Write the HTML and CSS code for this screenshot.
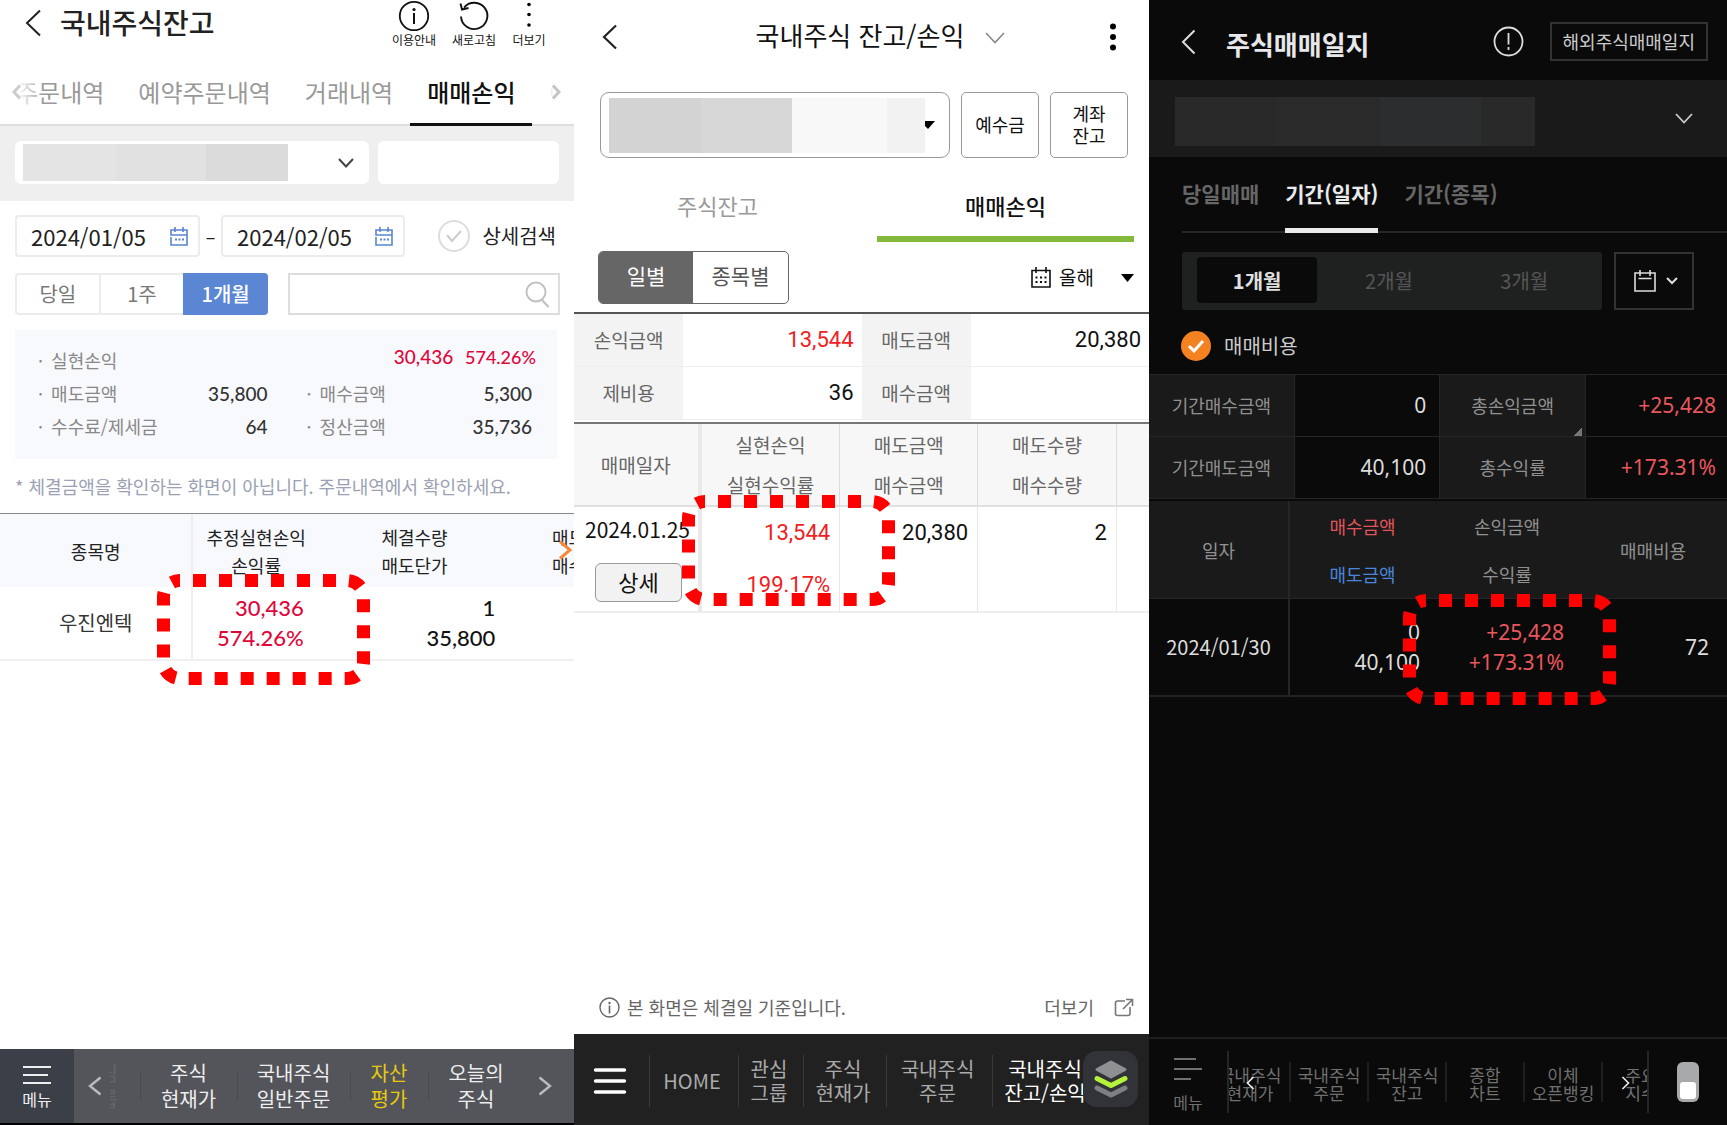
FILE: index.html
```html
<!DOCTYPE html>
<html lang="ko">
<head>
<meta charset="utf-8">
<meta name="viewport" content="width=device-width, initial-scale=1">
<title>국내주식 매매손익</title>
<link rel="stylesheet" href="styles.css">
</head>
<body>
<svg class="defs" aria-hidden="true">
  <symbol id="highlight" viewBox="0 0 213 111">
    <rect x="6.500" y="6.500" width="200" height="98" rx="16.300" fill="none" stroke="#f00" stroke-width="13" stroke-dasharray="13 13" stroke-dashoffset="12.800"/>
  </symbol>
</svg>
<main class="screens">

  <section class="screen balance">
    <header class="bal-header">
      <button class="icon-btn bal-back" aria-label="뒤로"><svg width="17" height="28" viewBox="0 0 17 28"><path d="M15 1.500 2 14l13 12.500" fill="none" stroke="#222" stroke-width="2"/></svg></button>
      <h1 class="bal-title">국내주식잔고</h1>
      <div class="bal-actions">
        <button class="action"><svg width="32" height="33" viewBox="0 0 32 33"><circle cx="16" cy="16" r="14.200" fill="none" stroke="#111" stroke-width="1.800"/><circle cx="16" cy="9.500" r="1.600" fill="#111"/><path d="M16 13v11" stroke="#111" stroke-width="2"/></svg>이용안내</button>
        <button class="action"><svg width="32" height="33" viewBox="0 0 32 33"><path d="M3 16.500A13.200 13.200 0 1 0 6 7.500M2.500 3.500 4 9.500l6.500-1.500" fill="none" stroke="#111" stroke-width="1.900"/></svg>새로고침</button>
        <button class="action action-more"><svg width="10" height="33" viewBox="0 0 10 33"><circle cx="5" cy="4.500" r="1.800"/><circle cx="5" cy="14.500" r="1.800"/><circle cx="5" cy="25" r="1.800"/></svg>더보기</button>
      </div>
    </header>
    <nav class="bal-tabs">
      <button class="bal-tab">주문내역</button>
      <button class="bal-tab">예약주문내역</button>
      <button class="bal-tab">거래내역</button>
      <button class="bal-tab active">매매손익</button>
      <button class="bal-tab">예수금</button>
      <span class="fade fade-left"><svg width="10" height="16" viewBox="0 0 10 16"><path d="M8 1.500 2 8l6 6.500" fill="none" stroke="#ccc" stroke-width="3"/></svg></span>
      <span class="fade fade-right"><svg width="10" height="16" viewBox="0 0 10 16"><path d="m2 1.500 6 6.500-6 6.500" fill="none" stroke="#c4c4c4" stroke-width="3"/></svg></span>
    </nav>
    <div class="bal-account">
      <label class="picker bal-picker">
        <select aria-label="계좌 선택"><option></option></select>
        <span class="mask mask-light"></span>
        <svg class="picker-arrow" width="16" height="10" viewBox="0 0 16 10"><path d="m1 1 7 7.500L15 1" fill="none" stroke="#444" stroke-width="2"/></svg>
      </label>
      <input class="bal-pass" type="password" aria-label="계좌 비밀번호">
    </div>
    <div class="bal-dates">
      <label class="date-field"><input type="text" value="2024/01/05" aria-label="시작일"><svg width="18" height="19" viewBox="0 0 18 19"><path d="M1 8V3h16v5zM1 10v8h16V8M5 0v5M13 0v5" fill="none" stroke="#5a84d3" stroke-width="1.600"/><path d="M5 12.500h2M8.500 12.500h2M12 12.500h2" stroke="#5a84d3" stroke-width="2"/></svg></label>
      <span class="dash">–</span>
      <label class="date-field"><input type="text" value="2024/02/05" aria-label="종료일"><svg width="18" height="19" viewBox="0 0 18 19"><path d="M1 8V3h16v5zM1 10v8h16V8M5 0v5M13 0v5" fill="none" stroke="#5a84d3" stroke-width="1.600"/><path d="M5 12.500h2M8.500 12.500h2M12 12.500h2" stroke="#5a84d3" stroke-width="2"/></svg></label>
      <label class="check bal-check"><span class="tick"><input type="checkbox"><svg width="18" height="14" viewBox="0 0 18 14"><path d="m2 6 5 6 9-10" fill="none" stroke="#ccc" stroke-width="2"/></svg></span>상세검색</label>
    </div>
    <div class="bal-filter">
      <div class="bal-segment"><button>당일</button><button>1주</button><button class="active">1개월</button></div>
      <label class="search"><input type="search" aria-label="종목 검색"><svg width="25" height="27" viewBox="0 0 25 27"><circle cx="11" cy="11" r="9.500" fill="none" stroke="#c2c2c2" stroke-width="2"/><path d="m16.500 18.500 7 7.500" stroke="#c2c2c2" stroke-width="2.200"/></svg></label>
    </div>
    <dl class="bal-summary">
      <div class="wide"><dt><i>·</i> 실현손익</dt><dd class="gain">30,436 <small>574.26%</small></dd></div>
      <div><dt><i>·</i> 매도금액</dt><dd>35,800</dd></div>
      <div><dt><i>·</i> 매수금액</dt><dd>5,300</dd></div>
      <div><dt><i>·</i> 수수료/제세금</dt><dd>64</dd></div>
      <div><dt><i>·</i> 정산금액</dt><dd>35,736</dd></div>
    </dl>
    <p class="bal-note">* 체결금액을 확인하는 화면이 아닙니다. 주문내역에서 확인하세요.</p>
    <div class="table-clip">
      <table class="bal-table">
        <colgroup><col class="b1"><col class="b2"><col class="b3"><col class="b4"></colgroup>
        <thead><tr><th>종목명</th><th>추정실현손익<br>손익률</th><th>체결수량<br>매도단가</th><th>매도금액<br>매수금액</th></tr></thead>
        <tbody><tr><td>우진엔텍</td><td class="gain">30,436<br>574.26%</td><td>1<br>35,800</td><td>35,800<br>5,300</td></tr></tbody>
      </table>
      <svg class="scroll-hint" width="15" height="20" viewBox="0 0 15 20"><path d="m2 1.500 10 8.500-10 8.500" fill="none" stroke="#f5893a" stroke-width="3"/></svg>
      <svg class="ring ring-a" width="213" height="111"><use href="#highlight"/></svg>
    </div>
    <nav class="bal-nav">
      <a class="bal-menu" href="#"><svg width="30" height="20" viewBox="0 0 30 20"><path d="M1 2h28M1 10h25M1 18h28" stroke="#eee" stroke-width="2"/></svg>메뉴</a>
      <div class="bal-links">
        <button class="icon-btn nav-prev" aria-label="이전"><svg width="14" height="20" viewBox="0 0 14 20"><path d="M12.500 1.500 2 10l10.500 8.500" fill="none" stroke="#bbb" stroke-width="2.400"/></svg></button>
        <a class="faded" href="#">관심<br>그룹</a>
        <a href="#">주식<br>현재가</a>
        <a href="#">국내주식<br>일반주문</a>
        <a class="active" href="#">자산<br>평가</a>
        <a href="#">오늘의<br>주식</a>
        <button class="icon-btn nav-next" aria-label="다음"><svg width="14" height="20" viewBox="0 0 14 20"><path d="M1.500 1.500 12 10 1.500 18.500" fill="none" stroke="#bbb" stroke-width="2.400"/></svg></button>
      </div>
    </nav>
  </section>

  <section class="screen profit">
    <header class="pro-header">
      <button class="icon-btn" aria-label="뒤로"><svg width="16" height="26" viewBox="0 0 16 26"><path d="M14 1.500 2 13l12 11.500" fill="none" stroke="#222" stroke-width="2.200"/></svg></button>
      <h1 class="pro-title">국내주식 잔고/손익</h1>
      <button class="icon-btn pro-open" aria-label="화면 선택"><svg width="20" height="12" viewBox="0 0 20 12"><path d="m1 1 9 9.500L19 1" fill="none" stroke="#888" stroke-width="1.600"/></svg></button>
      <button class="icon-btn pro-more" aria-label="더보기"><svg width="8" height="28" viewBox="0 0 8 28"><circle cx="4" cy="3.500" r="3"/><circle cx="4" cy="14" r="3"/><circle cx="4" cy="24.500" r="3"/></svg></button>
    </header>
    <div class="pro-account">
      <label class="picker pro-picker">
        <select aria-label="계좌 선택"><option></option></select>
        <svg class="picker-arrow" width="15" height="8" viewBox="0 0 15 8"><path d="M0 0h15L8 8z"/></svg>
        <span class="mask mask-mid"></span>
      </label>
      <button class="pro-box">예수금</button>
      <button class="pro-box">계좌<br>잔고</button>
    </div>
    <nav class="pro-tabs"><button>주식잔고</button><button class="active">매매손익</button></nav>
    <div class="pro-filter">
      <div class="pro-segment"><button class="active">일별</button><button>종목별</button></div>
      <label class="period">
        <svg width="20" height="21" viewBox="0 0 20 21"><path d="M1 3.500h18V20H1zM5 0v6M15 0v6" fill="none" stroke="#111" stroke-width="1.600"/><path d="M4.500 10.500h2m2.500 0h2m2.500 0h2M4.500 15h2m2.500 0h2m2.500 0h2" stroke="#111" stroke-width="2.200"/></svg>
        <span class="period-pick"><select aria-label="기간"><option>올해</option></select><svg width="13" height="8" viewBox="0 0 13 8"><path d="M0 0h13L6.500 8z"/></svg></span>
      </label>
    </div>
    <table class="pro-sums">
      <colgroup><col class="s1"><col class="s2"><col class="s1"><col class="s2"></colgroup>
      <tbody>
        <tr><th>손익금액</th><td class="up">13,544</td><th>매도금액</th><td>20,380</td></tr>
        <tr><th>제비용</th><td>36</td><th>매수금액</th><td></td></tr>
      </tbody>
    </table>
    <div class="table-clip">
      <table class="pro-table">
        <colgroup><col class="p1"><col class="p2"><col class="p3"><col class="p2"><col></colgroup>
        <thead><tr><th>매매일자</th><th>실현손익<br>실현수익률</th><th>매도금액<br>매수금액</th><th>매도수량<br>매수수량</th><th></th></tr></thead>
        <tbody><tr><td class="day">2024.01.25<button>상세</button></td><td class="up">13,544<br>199.17%</td><td>20,380</td><td>2</td><td></td></tr></tbody>
      </table>
      <svg class="ring ring-b" width="213" height="111"><use href="#highlight"/></svg>
    </div>
    <div class="pro-note">
      <svg width="21" height="21" viewBox="0 0 21 21"><circle cx="10.500" cy="10.500" r="9.500" fill="none" stroke="#666" stroke-width="1.400"/><circle cx="10.500" cy="6" r="1.200" fill="#666"/><path d="M10.500 8.500v8" stroke="#666" stroke-width="1.600"/></svg>
      <span>본 화면은 체결일 기준입니다.</span>
      <a href="#">더보기<svg width="20" height="19" viewBox="0 0 20 19"><path d="M11 3H3.500Q1.500 3 1.500 5v10.500q0 2 2 2H14q2 0 2-2V9M9 11l9-9M12 1.500h6.500V8" fill="none" stroke="#777" stroke-width="1.600"/></svg></a>
    </div>
    <nav class="pro-nav">
      <a href="#" aria-label="전체 메뉴"><svg width="34" height="28" viewBox="0 0 34 28"><path d="M2.500 3h29M2.500 14h29M2.500 25h29" stroke="#fff" stroke-width="3.400" stroke-linecap="round"/></svg></a>
      <a href="#">HOME</a>
      <a href="#">관심<br>그룹</a>
      <a href="#">주식<br>현재가</a>
      <a href="#">국내주식<br>주문</a>
      <a class="active" href="#">국내주식<br>잔고/손익</a>
      <button class="layers" aria-label="최근 화면"><svg width="34" height="38" viewBox="0 0 34 38"><path d="m3 28 14 7 14-7" fill="none" stroke="#7d7f81" stroke-width="5" stroke-linecap="round" stroke-linejoin="round"/><path d="m3 18.500 14 7 14-7" fill="none" stroke="#b5f23c" stroke-width="5" stroke-linecap="round" stroke-linejoin="round"/><path d="M17 2 31 9.500 17 17 3 9.500z" fill="#8e9092" stroke="#8e9092" stroke-width="3" stroke-linejoin="round"/></svg></button>
    </nav>
  </section>

  <section class="screen journal">
    <header class="jou-header">
      <button class="icon-btn" aria-label="뒤로"><svg width="15" height="26" viewBox="0 0 15 26"><path d="M13.500 1.500 2 13l11.500 11.500" fill="none" stroke="#ddd" stroke-width="2"/></svg></button>
      <h1 class="jou-title">주식매매일지</h1>
      <button class="icon-btn" aria-label="안내"><svg width="31" height="31" viewBox="0 0 31 31"><circle cx="15.500" cy="15.500" r="14" fill="none" stroke="#ddd" stroke-width="1.800"/><path d="M15.500 7v11.500M15.500 21v3" stroke="#ddd" stroke-width="1.800"/></svg></button>
      <button class="jou-over">해외주식매매일지</button>
    </header>
    <label class="picker jou-picker">
      <select aria-label="계좌 선택"><option></option></select>
      <span class="mask mask-dark"></span>
      <svg class="picker-arrow" width="18" height="11" viewBox="0 0 18 11"><path d="m1 1 8 8.500L17 1" fill="none" stroke="#ccc" stroke-width="1.800"/></svg>
    </label>
    <nav class="jou-tabs"><button>당일매매</button><button class="active">기간(일자)</button><button>기간(종목)</button></nav>
    <div class="jou-range">
      <div class="jou-segment"><button class="active">1개월</button><button>2개월</button><button>3개월</button></div>
      <button class="jou-cal" aria-label="기간 직접 선택"><svg width="22" height="22" viewBox="0 0 22 22"><path d="M1 3h20v18H1zM6 0v6M16 0v6M4.500 8.500h13" fill="none" stroke="#ddd" stroke-width="1.600"/></svg><svg width="12" height="8" viewBox="0 0 12 8"><path d="m1 1 5 5 5-5" fill="none" stroke="#ddd" stroke-width="2"/></svg></button>
    </div>
    <label class="check jou-check"><span class="tick"><input type="checkbox" checked><svg width="18" height="14" viewBox="0 0 18 14"><path d="m2 7 5 5 9-10" fill="none" stroke="#fff" stroke-width="3"/></svg></span>매매비용</label>
    <table class="jou-sums">
      <colgroup><col class="t1"><col class="t1"><col class="t1"><col></colgroup>
      <tbody>
        <tr><th>기간매수금액</th><td>0</td><th class="fold">총손익금액</th><td class="rise">+25,428</td></tr>
        <tr><th>기간매도금액</th><td>40,100</td><th>총수익률</th><td class="rise">+173.31%</td></tr>
      </tbody>
    </table>
    <div class="table-clip">
      <table class="jou-table">
        <colgroup><col class="j1"><col class="j2"><col class="j3"><col></colgroup>
        <thead><tr><th>일자</th><th><span class="buy">매수금액</span><br><span class="sell">매도금액</span></th><th>손익금액<br>수익률</th><th>매매비용</th></tr></thead>
        <tbody><tr><td class="day">2024/01/30</td><td>0<br>40,100</td><td class="rise">+25,428<br>+173.31%</td><td class="fee">72</td></tr></tbody>
      </table>
      <svg class="ring ring-c" width="213" height="111"><use href="#highlight"/></svg>
    </div>
    <nav class="jou-nav">
      <a class="jou-menu" href="#"><svg width="28" height="24" viewBox="0 0 28 24"><path d="M0 2h22M0 12h28M0 22h17" stroke="#707070" stroke-width="2"/></svg>메뉴</a>
      <div class="jou-links">
        <a href="#">국내주식<br>현재가</a><a href="#">국내주식<br>주문</a><a href="#">국내주식<br>잔고</a><a href="#">종합<br>차트</a><a href="#">이체<br>오픈뱅킹</a><a href="#">주요<br>지수</a>
        <svg class="arrow-left" width="9" height="14" viewBox="0 0 9 14"><path d="M7.500 1 1.500 7l6 6" fill="none" stroke="#eee" stroke-width="1.600"/></svg>
        <svg class="arrow-right" width="9" height="14" viewBox="0 0 9 14"><path d="m1.500 1 6 6-6 6" fill="none" stroke="#eee" stroke-width="1.600"/></svg>
      </div>
      <button class="icon-btn jou-switch" aria-label="화면 전환"><svg width="24" height="42" viewBox="0 0 24 42"><rect x="1" y="1" width="22" height="40" rx="6" fill="#a8a9ab"/><rect x="4" y="21" width="16" height="17" rx="3" fill="#fff"/></svg></button>
    </nav>
  </section>
</main>
</body>
</html>
```

FILE: styles.css
```css
* { box-sizing: border-box; }
body {
  margin: 0;
  font-family: "Noto Sans CJK KR", "Noto Sans", sans-serif;
  font-size: 18px;
  background: #fff;
  color: #222;
}
h1, p, dl, dd { margin: 0; }
button, input, select { font: inherit; color: inherit; background: none; border: 0; padding: 0; margin: 0; border-radius: 0; }
input, select { appearance: none; min-width: 0; outline: none; }
button { white-space: nowrap; }
a { color: inherit; text-decoration: none; white-space: nowrap; }
svg { display: block; flex: none; }
table { width: 100%; border-spacing: 0; table-layout: fixed; }
th, td { padding: 0; font-weight: 400; white-space: nowrap; }
.defs { position: absolute; width: 0; height: 0; }

.screens { display: grid; grid-template-columns: 574fr 575fr 578fr; min-height: 100vh; }
.screen { display: flex; flex-direction: column; min-width: 0; overflow: hidden; }
.icon-btn { display: flex; align-items: center; justify-content: center; }
.picker { display: grid; align-items: center; }
.picker > * { grid-area: 1 / 1; }
.picker select { width: 100%; height: 100%; }
.picker-arrow { justify-self: end; pointer-events: none; }
.mask { pointer-events: none; }
.check { display: flex; align-items: center; white-space: nowrap; }
.tick { display: grid; place-items: center; }
.tick > * { grid-area: 1 / 1; }
.tick input { border-radius: 50%; }
.tick svg { pointer-events: none; }
.table-clip { position: relative; }
.ring { position: absolute; pointer-events: none; }

/* balance screen */
.bal-header { display: flex; align-items: flex-start; height: 62px; padding: 0 28px 0 25px; }
.bal-back { height: 46px; }
.bal-title { flex: 1; padding-left: 18px; font-size: 28px; font-weight: 500; line-height: 44px; }
.bal-actions { display: flex; gap: 16px; color: #111; }
.action { display: flex; flex-direction: column; align-items: center; width: 44px; font-size: 12px; line-height: 14px; }
.action-more { width: 34px; }
.bal-tabs { position: relative; display: flex; height: 64px; overflow: hidden; box-shadow: inset 0 -2px #ddd; }
.bal-tab { flex: none; padding: 0 17px 4px; font-size: 24px; line-height: 56px; color: #999; }
.bal-tab:first-child { margin-left: -1px; }
.bal-tab.active { padding-bottom: 1px; color: #111; font-weight: 500; border-bottom: 3px solid #111; }
.fade { position: absolute; top: 0; height: 60px; display: flex; align-items: center; }
.fade-left { left: 0; width: 44px; padding-left: 12px; background: linear-gradient(to right, #fff 40%, #fff0); }
.fade-right { right: 0; width: 28px; padding-left: 5px; background: linear-gradient(to right, #fff8, #fff 30%); }
.bal-account { display: grid; grid-template-columns: 354fr 181fr; gap: 9px; padding: 15px 15px 17px; background: #efefef; }
.bal-picker { height: 43px; padding: 0 15px 0 8px; background: #fff; border-radius: 6px; }
.mask-light { width: 80%; height: 37px; background: linear-gradient(to right, #e4e4e4 35%, #e1e1e1 35% 69%, #dbdbdb 69%); }
.bal-pass { background: #fff; border-radius: 6px; }
.bal-dates { display: grid; grid-template-columns: minmax(0, 185fr) 21px minmax(0, 184fr) minmax(0, 154fr); align-items: center; height: 56px; padding: 14px 15px 0; }
.date-field { display: flex; align-items: center; height: 42px; padding: 0 10px 0 14px; border: 2px solid #ececec; border-radius: 4px; }
.date-field input { flex: 1; width: 0; font-size: 22px; line-height: 32px; }
.dash { line-height: 38px; text-align: center; }
.bal-check { justify-content: flex-end; gap: 12px; padding-right: 3px; font-size: 20px; line-height: 38px; }
.bal-check input { width: 32px; height: 32px; border: 2px solid #ddd; }
.bal-filter { display: grid; grid-template-columns: 253fr 272fr; gap: 20px; padding: 16px 14px 0 15px; }
.bal-segment { display: grid; grid-template-columns: 83fr 86fr 84fr; height: 42px; border: 2px solid #ececec; border-radius: 4px; font-size: 20px; color: #777; line-height: 34px; }
.bal-segment button + button { border-left: 2px solid #ececec; }
.bal-segment button.active { margin: -2px -2px -2px 0; border: 0; background: #5a86d4; color: #fff; font-weight: 500; border-radius: 0 4px 4px 0; }
.search { display: flex; align-items: center; padding: 0 8px; border: 2px solid #ddd; }
.search input { flex: 1; }
.bal-summary { display: grid; grid-template-columns: 228fr 224fr; column-gap: 39px; margin: 15px 17px 0 15px; padding: 14px 25px 16px 23px; background: #f8f9fd; color: #888; line-height: 33px; }
.bal-summary div { display: flex; justify-content: space-between; }
.bal-summary i { margin-right: 3px; font-style: normal; }
.bal-summary dd { color: #333; font-family: Lato, "Noto Sans CJK KR", sans-serif; font-size: 19px; font-weight: 500; }
.bal-summary .wide { grid-column: 1 / -1; margin-right: -4px; }
.wide dd { line-height: 26px; }
.bal-summary small { margin-left: 7px; font-size: 18px; }
.bal-summary .gain, .bal-table .gain { color: #e0063a; }
.bal-note { padding: 13px 15px; font-size: 18px; line-height: 28px; color: #9aa1b2; white-space: nowrap; }
.balance .table-clip { overflow: hidden; height: 174px; }
.bal-table { width: 115%; border-top: 1px solid #888; }
.b1 { width: 29.3%; } .b2 { width: 19%; } .b3 { width: 29%; }
.bal-table th { height: 73px; background: #f8f9fd; line-height: 28px; }
.bal-table td { height: 74px; border-bottom: 2px solid #f0f0f0; text-align: right; padding-right: 15px; font-family: Lato, "Noto Sans CJK KR", sans-serif; font-size: 22px; font-weight: 500; line-height: 30px; color: #111; }
.bal-table td:first-child { padding: 0; text-align: center; font-size: 20px; font-weight: 400; color: #333; }
.bal-table th:first-child, .bal-table td:first-child { border-right: 2px solid #eee; }
.scroll-hint { position: absolute; right: 1px; top: 27px; }
.ring-a { left: 157px; top: 61px; }
.bal-nav { display: flex; height: 76px; margin-top: auto; border-bottom: 2px solid #000; background: #53555b; color: #eee; }
.bal-menu { display: flex; flex-direction: column; align-items: center; gap: 6px; width: 74px; padding-top: 16px; background: #3b3f48; font-size: 16px; line-height: 16px; }
.bal-links { flex: 1; display: grid; grid-template-columns: 36fr 30fr 97fr 113fr 78fr 96fr 50fr; align-items: center; font-size: 20px; line-height: 26px; text-align: center; }
.bal-links a + a { background: linear-gradient(#484a50, #484a50) left center / 1px 30px no-repeat; }
.bal-links .active { color: #e8c80e; }
.bal-links .faded { display: flex; justify-content: flex-end; padding-right: 22px; overflow: hidden; color: #63656b; }
.nav-prev { padding-left: 6px; }
.nav-next { padding-right: 8px; }

/* profit screen */
.pro-header { display: grid; grid-template-columns: 1fr auto 1fr auto; align-items: center; height: 74px; padding: 0 32px 0 28px; justify-items: start; }
.pro-title { padding: 0 0 4px 9px; font-size: 26px; font-weight: 400; line-height: 36px; color: #111; }
.pro-open { padding-left: 21px; padding-top: 2px; }
.pro-account { display: grid; grid-template-columns: 350fr 78fr 78fr; column-gap: 11px; margin: 18px 21px 0 26px; height: 66px; }
.pro-picker { padding: 0 14px 0 8px; border: 1px solid #999; border-radius: 9px; }
.mask-mid { width: 97%; height: 55px; background: linear-gradient(to right, #d3d3d3 29%, #d7d7d7 29% 58%, #f8f8f8 58% 88%, #f2f2f2 88%); }
.pro-box { padding-bottom: 3px; border: 1px solid #999; border-radius: 5px; line-height: 22px; color: #111; }
.pro-tabs { display: grid; grid-template-columns: 1fr 1fr; column-gap: 31px; padding: 0 15px; }
.pro-tabs button { height: 84px; padding-top: 16px; border-bottom: 6px solid transparent; font-size: 22px; color: #999; }
.pro-tabs .active { border-color: #83b93c; color: #111; font-weight: 500; }
.pro-filter { display: flex; justify-content: space-between; align-items: center; padding: 9px 15px 8px 24px; }
.pro-segment { display: grid; grid-template-columns: 94px 95px; height: 53px; border: 1px solid #666; border-radius: 5px; overflow: hidden; font-size: 21px; color: #555; line-height: 44px; }
.pro-segment button { padding-bottom: 5px; }
.pro-segment .active { background: #666; color: #fff; }
.period { display: flex; align-items: center; gap: 8px; color: #111; }
.period-pick { display: grid; align-items: center; width: 75px; }
.period-pick > * { grid-area: 1 / 1; }
.period-pick select { padding-bottom: 2px; font-size: 19px; line-height: 28px; }
.period-pick svg { justify-self: end; pointer-events: none; }
.pro-sums { border-top: 2px solid #555; }
.s1 { width: 19%; } .s2 { width: 31%; }
.pro-sums th, .pro-sums td { height: 53px; padding-bottom: 2px; border-bottom: 1px solid #eee; }
.profit th { font-size: 19px; color: #666; }
.pro-sums th { background: #f3f3f3; }
.profit td { font-family: Roboto, "Noto Sans CJK KR", sans-serif; font-size: 22px; text-align: right; color: #111; }
.pro-sums td { padding-right: 8px; }
.profit td.up { color: #f0201e; }
.pro-table { border-top: 2px solid #777; margin-top: 2px; }
.p1 { width: 22.2%; } .p2 { width: 24.1%; } .p3 { width: 24%; }
.pro-table th { height: 83px; background: #f7f7f7; line-height: 40px; border-bottom: 2px solid #e0e0e0; border-right: 1px solid #ddd; }
.pro-table td { height: 105px; vertical-align: top; padding-right: 9px; line-height: 52px; border-bottom: 2px solid #eee; border-right: 1px solid #e8e8e8; }
.pro-table th:first-child, .pro-table td:first-child { border-right: 4px solid #e9e9e9; }
.pro-table th:last-child, .pro-table td:last-child { border-right: 0; }
.pro-table .day { padding: 0 0 0 11px; text-align: left; font-family: "Noto Sans CJK KR", sans-serif; font-size: 21px; line-height: 44px; }
.day button { display: block; width: 87px; height: 39px; margin: 12px 0 0 10px; padding-bottom: 4px; border: 1px solid #999; border-radius: 6px; background: #f2f2f2; font-size: 22px; line-height: 32px; }
.ring-b { left: 108px; top: 75px; }
.pro-note { display: flex; align-items: center; gap: 7px; margin-top: auto; padding: 0 15px 13px 25px; line-height: 28px; color: #666; }
.pro-note a { display: flex; align-items: center; gap: 20px; margin-left: auto; }
.pro-nav { position: relative; display: grid; grid-template-columns: 75fr 89fr 65fr 83fr 106fr 107fr 50fr; align-items: center; height: 91px; padding-top: 3px; background: #212121; color: #aaa; font-size: 20px; line-height: 24px; text-align: center; }
.pro-nav a { display: grid; place-items: center; height: 52px; padding-right: 4px; }
.pro-nav a + a { border-left: 1px solid #3a3a3a; }
.pro-nav .active { padding-right: 2px; color: #fff; }
.layers { position: absolute; right: 11px; top: 17px; width: 55px; height: 56px; display: grid; place-items: center; border-radius: 14px; background: #323338; }

/* journal screen */
.journal { background: #0a0a0a; color: #ccc; }
.jou-header { display: flex; align-items: center; height: 80px; padding: 3px 19px 0 32px; }
.jou-title { flex: 1; padding: 4px 0 0 30px; font-size: 26px; font-weight: 700; line-height: 36px; color: #e6e8ea; }
.jou-over { height: 39px; margin-left: 26px; padding: 0 11px 2px; border: 2px solid #333; line-height: 32px; }
.jou-picker { height: 77px; padding: 0 34px 0 26px; background: #1a1a1a; }
.mask-dark { width: 69.5%; height: 49px; margin-top: 5px; background: linear-gradient(to right, #29292a 28%, #2a2a2a 28% 57%, #2c2d2f 57% 85%, #292929 85%); }
.jou-tabs { display: flex; gap: 26px; height: 76px; margin-left: 33px; box-shadow: inset 0 -2px #262626; }
.jou-tabs button { font-size: 21px; font-weight: 700; color: #666; line-height: 66px; border-bottom: 5px solid transparent; }
.jou-tabs .active { color: #e8eaec; border-color: #e8eaec; }
.jou-range { display: grid; grid-template-columns: 420fr 80fr; column-gap: 12px; padding: 19px 33px 0; }
.jou-segment { display: grid; grid-template-columns: repeat(3, 1fr); height: 58px; padding: 5px 10px 7px 4px; border-radius: 3px; background: #1f2121; font-size: 20px; color: #555; }
.jou-segment .active { margin: 0 4px 0 11px; border-radius: 4px; background: #0a0a0a; color: #e0e0e0; font-weight: 700; }
.jou-cal { display: flex; align-items: center; justify-content: center; gap: 10px; padding-left: 4px; border: 2px solid #333; }
.jou-check { gap: 13px; padding: 21px 32px 13px; font-size: 20px; line-height: 30px; }
.jou-check input { width: 30px; height: 30px; background: #f58220; }
.jou-sums { border-top: 1px solid #262626; }
.t1 { width: 25.2%; }
.jou-sums th, .jou-sums td { height: 62px; padding-bottom: 2px; border-bottom: 1px solid #262626; border-right: 1px solid #262626; }
.journal th { background: #1a1a1a; color: #909090; }
.journal td { padding-right: 13px; text-align: right; font-family: "Noto Sans", "Noto Sans CJK KR", sans-serif; font-size: 21px; color: #ddd; }
.jou-sums td:last-child { padding-right: 11px; border-right: 0; }
.jou-sums .fold { background: linear-gradient(135deg, transparent 50%, #777 50%) right 3px bottom 0 / 9px 9px no-repeat #1a1a1a; }
.journal td.rise { color: #e8575c; }
.jou-table { margin-top: 2px; }
.j1 { width: 24.4%; } .j2 { width: 25.1%; } .j3 { width: 24.9%; }
.jou-table th { height: 98px; line-height: 48px; border-bottom: 1px solid #262626; }
.jou-table td { height: 98px; line-height: 30px; border-bottom: 2px solid #222; padding-right: 15px; }
.jou-table th:first-child, .jou-table td:first-child { border-right: 2px solid #262626; }
.jou-table td.day { padding: 0; text-align: center; font-family: "Noto Sans CJK KR", sans-serif; font-size: 20px; }
.jou-table td.fee { padding-right: 18px; }
.buy { color: #e0555c; }
.sell { color: #4a86dc; }
.ring-c { left: 254px; top: 95px; }
.jou-nav { display: grid; grid-template-columns: 78fr 422fr 78fr; align-items: center; height: 88px; margin-top: auto; border-top: 2px solid #1e1e1e; color: #707070; }
.jou-menu { display: flex; flex-direction: column; align-items: center; gap: 13px; padding-top: 3px; font-size: 16px; line-height: 16px; }
.jou-links { position: relative; display: flex; align-items: center; height: 62px; overflow: hidden; border: solid #262626; border-width: 0 2px; font-size: 17px; line-height: 18px; text-align: center; }
.jou-links a { flex: 0 0 78px; padding-top: 4px; }
.jou-links a:first-child { margin-left: -18px; }
.jou-links a + a { border-left: 2px solid #1e1e1e; }
.arrow-left { position: absolute; left: 17px; top: 25px; }
.arrow-right { position: absolute; right: 17px; top: 25px; }
```
